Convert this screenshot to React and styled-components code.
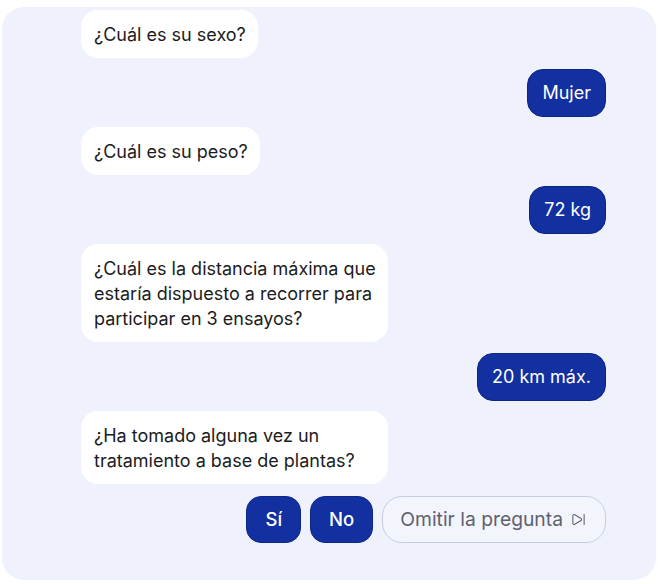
import styled, { createGlobalStyle } from 'styled-components';
import { SkipForward } from 'lucide-react';

const GlobalStyle = createGlobalStyle`
  body {
    margin: 0;
    background: #ffffff;
    font-family: Inter, "Noto Sans", sans-serif;
  }
`;

const messages = [
  { from: 'bot', text: '¿Cuál es su sexo?' },
  { from: 'user', text: 'Mujer' },
  { from: 'bot', text: '¿Cuál es su peso?' },
  { from: 'user', text: '72 kg' },
  { from: 'bot', text: '¿Cuál es la distancia máxima que estaría dispuesto a recorrer para participar en 3 ensayos?' },
  { from: 'user', text: '20 km máx.' },
  { from: 'bot', text: '¿Ha tomado alguna vez un tratamiento a base de plantas?' },
];

export default function App() {
  return (
    <>
      <GlobalStyle />
      <Panel>
        <Thread>
          {messages.map((m, i) =>
            m.from === 'bot' ? (
              <BotBubble key={i}>{m.text}</BotBubble>
            ) : (
              <UserBubble key={i}>{m.text}</UserBubble>
            )
          )}
          <Answers>
            <ChoiceButton>Sí</ChoiceButton>
            <ChoiceButton>No</ChoiceButton>
            <SkipButton>
              Omitir la pregunta
              <SkipForward size={15} strokeWidth={1.7} />
            </SkipButton>
          </Answers>
        </Thread>
      </Panel>
    </>
  );
}

const Panel = styled.div`
  margin: 7px 2px 0 2px;
  height: 573px;
  background: #eff2fc;
  border-radius: 22px;
  padding: 3px 50px 0 79px;
  box-sizing: border-box;
  overflow: hidden;
`;

const Thread = styled.div`
  display: flex;
  flex-direction: column;
  gap: 10.5px;
`;

const BotBubble = styled.div`
  align-self: flex-start;
  max-width: 307px;
  box-sizing: border-box;
  background: #ffffff;
  color: #1b1c22;
  font-size: 18px;
  line-height: 25px;
  padding: 11.5px 12px 11.5px 13px;
  border-radius: 17px;
`;

const UserBubble = styled.div`
  align-self: flex-end;
  background: #12309f;
  border: 1px solid #0d2583;
  color: #ffffff;
  font-size: 18px;
  line-height: 25px;
  padding: 10.5px 14px;
  border-radius: 16px;
`;

const Answers = styled.div`
  display: flex;
  justify-content: flex-end;
  gap: 9px;
  margin-top: 1px;
`;

const ChoiceButton = styled.button`
  font-family: inherit;
  height: 47px;
  padding: 0 18px;
  background: #12309f;
  border: 1px solid #0d2583;
  border-radius: 15px;
  color: #ffffff;
  font-size: 18.5px;
  font-weight: 500;
`;

const SkipButton = styled.button`
  font-family: inherit;
  display: flex;
  align-items: center;
  gap: 8px;
  height: 47px;
  padding: 0 19px 0 17px;
  background: #f3f5fd;
  border: 1px solid #c9cce0;
  border-radius: 20px;
  color: #5e616f;
  font-size: 19.3px;
`;
